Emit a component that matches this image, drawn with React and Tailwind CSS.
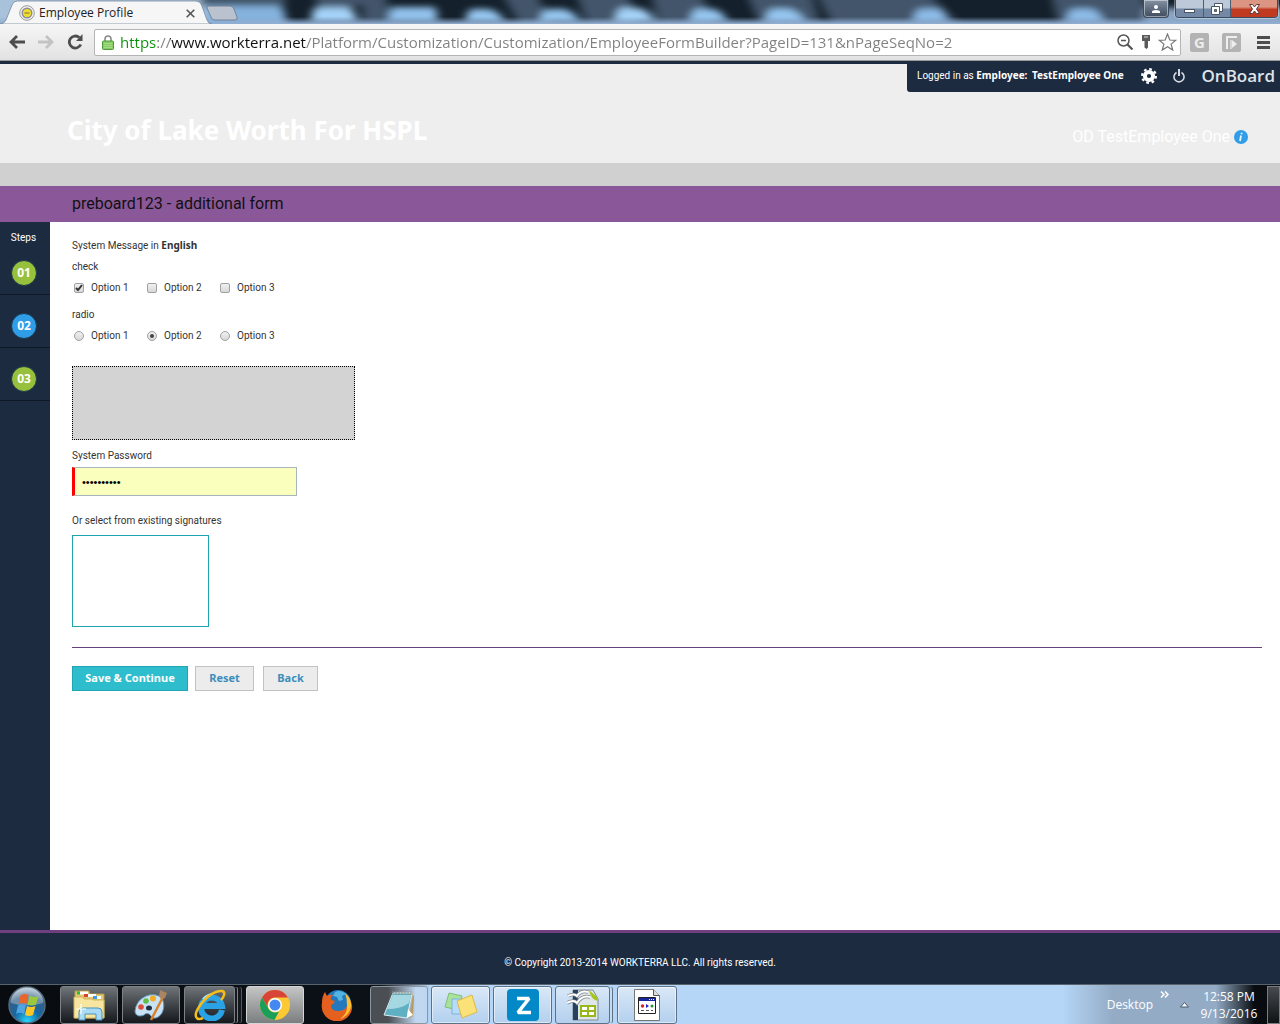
import React from 'react';

const URL = 'https://www.workterra.net/Platform/Customization/Customization/EmployeeFormBuilder?PageID=131&nPageSeqNo=2';

const options = ['Option 1', 'Option 2', 'Option 3'];

const steps = [
    { id: '01', color: 'bg-[#97c03d]' },
    { id: '02', color: 'bg-[#2f9de8]' },
    { id: '03', color: 'bg-[#97c03d]' },
];

/* ---------- browser window ---------- */

const GlassBackdrop = () => (
    <svg className="absolute inset-0 h-full w-full" viewBox="0 0 1280 24" preserveAspectRatio="none" aria-hidden="true">
        <defs>
            <filter id="soft" x="-20%" y="-50%" width="140%" height="200%">
                <feGaussianBlur stdDeviation="5 3" />
            </filter>
            <linearGradient id="edge" x1="0" y1="0" x2="0" y2="1">
                <stop offset="0.7" stopColor="#86a6cc" stopOpacity="0" />
                <stop offset="1" stopColor="#93afd2" />
            </linearGradient>
        </defs>
        <rect width="1280" height="24" fill="#14202b" />
        <g filter="url(#soft)">
            <rect x="-20" y="-10" width="230" height="50" fill="#a9c2dc" />
            <rect x="200" y="-10" width="85" height="16" fill="#3f5468" />
            <path d="M205 6h74q8 2 8 30h-82z" fill="#85b2de" />
            <path d="M310 -10h65l10 16h-65zM500 -10h35l18 40h-30zM575 -10h52l12 40h-50zM650 -10h50l15 40h-55zM745 -10h65l12 40h-60zM815 -10h110l40 40h-130zM1050 -10h95v40h-85z" fill="#43556a" />
            <path d="M365 -10h20l5 34h-28z" fill="#43556a" />
            <path d="M316 7h32q7 2 9 16h-46q1-14 5-16z" fill="#a4d2f8" />
            <path d="M392 7h42q4 2 3 16h-48q0-14 3-16z" fill="#91c1ec" />
            <path d="M471 9h18q12 3 16 14h-40q2-12 6-14z" fill="#95c6f0" />
            <path d="M546 9h18q12 3 16 14h-40q2-12 6-14z" fill="#95c6f0" />
            <path d="M621 8h18q12 3 16 15h-40q2-13 6-15z" fill="#a4d2f8" />
            <path d="M696 9h18q10 3 14 14h-38q2-12 6-14z" fill="#95c6f0" />
            <path d="M771 9h18q12 3 16 14h-40q2-12 6-14z" fill="#95c6f0" />
            <path d="M919 9h20q6 3 8 14h-34q2-12 6-14z" fill="#8dbbe8" />
            <path d="M1072 9h20q8 3 12 14h-38q2-12 6-14z" fill="#8dbbe8" />
            <rect x="1145" y="8" width="160" height="50" fill="#8ba6c4" />
        </g>
        <rect width="1280" height="24" fill="url(#edge)" />
    </svg>
);

const WindowButtons = () => (
    <div className="relative flex h-[19px] items-start gap-[6px] pr-[2px]">
        <button aria-label="Profile" className="flex h-[18px] w-[26px] items-center justify-center rounded-b-[4px] border border-t-0 border-[#3b4a5e] bg-gradient-to-b from-[#8492a4] to-[#3f4c5c] shadow-[inset_0_0_0_1px_rgba(255,255,255,0.45)]">
            <svg width="10" height="10" viewBox="0 0 10 10" fill="#fff">
                <circle cx="5" cy="3" r="2" />
                <path d="M1 9V7.500Q1.500 6 5 6t4 1.500V9z" />
            </svg>
        </button>
        <div className="flex h-[18px] overflow-hidden rounded-b-[4px] border border-t-0 border-[#3b4a5e] shadow-[0_0_0_1px_rgba(255,255,255,0.35)]">
            <button aria-label="Minimize" className="flex w-[28px] items-center justify-center border-r border-[#4b5d75] bg-gradient-to-b from-[#bdc9d8] from-45% to-[#7389a5] to-55%">
                <svg width="13" height="12" viewBox="0 0 13 12">
                    <rect x="1.500" y="6.500" width="10" height="3" fill="#fff" stroke="#4a5568" />
                </svg>
            </button>
            <button aria-label="Restore" className="flex w-[27px] items-center justify-center border-r border-[#4b5d75] bg-gradient-to-b from-[#bdc9d8] from-45% to-[#7389a5] to-55%">
                <svg width="12" height="12" viewBox="0 0 12 12" fill="#fff" stroke="#4a5568">
                    <path d="M3.500.5h8v8h-8z" />
                    <path d="M.5 3.500h8v8h-8z" />
                    <path d="M3.500 6.500h2v2h-2z" fill="#7389a5" />
                </svg>
            </button>
            <button aria-label="Close window" className="flex w-[46px] items-center justify-center bg-gradient-to-b from-[#dd9583] from-40% to-[#c03a22] to-55%">
                <svg width="13" height="12" viewBox="0 0 13 12">
                    <path d="M1.500 1.500h3l2 2.500 2-2.500h3L8.500 6l3 4.500h-3l-2-2.500-2 2.500h-3l3-4.500z" fill="#fff" stroke="#5c3a3a" />
                </svg>
            </button>
        </div>
    </div>
);

const TitleBar = () => (
    <div className="relative flex h-6 items-start justify-between">
        <GlassBackdrop />
        <div className="relative flex h-6">
            <svg className="absolute inset-0" width="240" height="24" viewBox="0 0 240 24" aria-hidden="true">
                <path d="M0 24Q4 24 6 20L12 5Q13.500 1 17 1H196Q200 1 201.500 5L207 20Q208.500 24 212 24z" fill="#f6f6f6" stroke="#77889c" strokeWidth="0.8" />
                <path d="M209 6h21q3 0 4 3l3 8q1 3-2 3h-20q-3 0-4-3l-4-9q-.5-2 2-2z" fill="#b9c2ce" stroke="#66778c" strokeWidth="0.8" />
            </svg>
            <div className="relative flex h-6 w-[200px] items-center pt-[2px] pl-[19px]">
                <svg width="16" height="16" viewBox="0 0 16 16" aria-hidden="true">
                    <circle cx="8" cy="8" r="7.300" fill="#f3f3f3" stroke="#9a9a9a" />
                    <circle cx="8" cy="8" r="4.800" fill="#f0dc2c" stroke="#8c8c98" strokeWidth="1.400" />
                    <path d="M5.500 8h5" stroke="#8a7c55" strokeWidth="1.200" />
                </svg>
                <span className="ml-1 flex-1 text-[12px] text-[#222]">Employee Profile</span>
                <button aria-label="Close tab" className="mr-[5px]">
                    <svg width="9" height="9" viewBox="0 0 9 9" stroke="#555" strokeWidth="1.600">
                        <path d="M.7.7l7.600 7.600M8.300.7L.7 8.300" />
                    </svg>
                </button>
            </div>
            <button aria-label="New tab" className="relative w-[36px]" />
        </div>
        <WindowButtons />
    </div>
);

const Toolbar = () => (
    <div className="flex h-[37px] items-center border-b border-[#9a9a9a] bg-gradient-to-b from-[#f6f6f6] to-[#e2e2e2] pr-[10px] pl-[9px]">
        <button aria-label="Back" className="mr-[13px]">
            <svg width="16" height="14" viewBox="0 0 16 14" fill="none" stroke="#4d4d4d" strokeWidth="2.800">
                <path d="M2 7h14M8 1L2 7l6 6" />
            </svg>
        </button>
        <button aria-label="Forward" className="mr-[13px]">
            <svg width="16" height="14" viewBox="0 0 16 14" fill="none" stroke="#c3c3c3" strokeWidth="2.800">
                <path d="M0 7h14M8 1l6 6-6 6" />
            </svg>
        </button>
        <button aria-label="Reload">
            <svg width="17" height="16" viewBox="0 0 17 16" fill="none" stroke="#4d4d4d" strokeWidth="2.800">
                <path d="M13.800 10.500A6 6 0 1 1 12.300 3.500" />
                <path d="M15.500 0v7H9z" fill="#4d4d4d" stroke="none" />
            </svg>
        </button>
        <div className="ml-[10px] flex h-[27px] flex-1 items-center rounded-[2px] border border-[#b4b4b4] bg-white pr-[3px] pl-[7px]">
            <svg width="12" height="15" viewBox="0 0 12 15" aria-hidden="true">
                <path d="M3 7V4a3 3 0 0 1 6 0v3" fill="none" stroke="#8b8b8b" strokeWidth="1.600" />
                <rect x="0.500" y="6" width="11" height="8.500" rx="1" fill="#86cc63" stroke="#4f9a3a" />
                <path d="M2 8.500h8M2 10.500h8M2 12.500h8" stroke="#a5dd86" />
            </svg>
            <input
                type="text"
                aria-label="Address"
                defaultValue={URL}
                className="ml-[6px] h-[25px] min-w-0 flex-1 bg-[linear-gradient(90deg,#0a8f0a_36px,#808080_36px,#808080_50px,#111_50px,#111_186px,#808080_186px)] bg-clip-text text-[15px] text-transparent outline-none"
            />
            <svg width="16" height="16" viewBox="0 0 16 16" fill="none" stroke="#555" strokeWidth="1.500" aria-hidden="true">
                <circle cx="6.500" cy="6.500" r="5.500" />
                <path d="M4 6.500h5" />
                <path d="M10.500 10.500l5 5" strokeWidth="2.200" />
            </svg>
            <svg className="ml-2" width="10" height="14" viewBox="0 0 10 14" fill="#5a5a5a" aria-hidden="true">
                <path d="M1 0h8v6H7v6.500L5.500 14 3.500 12.500V6H1z" />
                <path d="M3 2h4" stroke="#ddd" />
            </svg>
            <svg className="ml-[7px]" width="19" height="18" viewBox="0 0 19 18" fill="#fff" stroke="#777" strokeWidth="1.200" aria-hidden="true">
                <path d="M9.500 1l2.300 6 6 .3-4.700 3.800 1.700 6-5.300-3.400-5.300 3.400 1.700-6L1.200 7.300l6-.3z" />
            </svg>
        </div>
        <button aria-label="G extension" className="ml-[9px] h-[19px] w-[19px] rounded-[2px] bg-[#b3b3b3] text-[15px] leading-[19px] font-bold text-[#ececec]">G</button>
        <button aria-label="Flag extension" className="ml-[13px] flex h-[19px] w-[19px] items-center justify-center rounded-[2px] bg-[#b3b3b3]">
            <svg width="13" height="14" viewBox="0 0 13 14" fill="none" stroke="#eee" strokeWidth="2">
                <path d="M2 14V2h10" />
                <path d="M6 14V5" strokeWidth="1.200" />
                <path d="M7 5l5 4-5 4z" fill="#eee" stroke="none" />
            </svg>
        </button>
        <button aria-label="Menu" className="ml-4 flex w-[13px] flex-col gap-[2px]">
            <span className="h-[3px] bg-[#4d4d4d]" />
            <span className="h-[3px] bg-[#4d4d4d]" />
            <span className="h-[3px] bg-[#4d4d4d]" />
        </button>
    </div>
);

/* ---------- site ---------- */

const Gear = () => (
    <svg width="16" height="16" viewBox="0 0 16 16" aria-hidden="true">
        <circle cx="8" cy="8" r="4.100" fill="none" stroke="#fff" strokeWidth="4" />
        <circle cx="8" cy="8" r="6.900" fill="none" stroke="#fff" strokeWidth="2.200" strokeDasharray="2.700 2.719" />
    </svg>
);

const Power = () => (
    <svg width="12" height="14" viewBox="0 0 12 14" fill="none" stroke="#d5dae0" strokeWidth="1.600" aria-hidden="true">
        <path d="M3.500 3.500a5 5 0 1 0 5 0" />
        <path d="M6 0v7" strokeWidth="2" />
    </svg>
);

const SiteHeader = () => (
    <header className="h-[102px] border-t-[3px] border-[#1c2b40] bg-[#eee]">
        <div className="flex justify-end">
            <div className="flex h-7 w-[373px] items-center rounded-bl-[3px] bg-[#1c2b40] pr-[5px] pb-[5px] pl-[10px] text-white">
                <p className="flex-1 text-[10px] whitespace-nowrap">
                    Logged in as <b className="mr-[2px] font-['Noto_Sans']">Employee:</b> <b className="font-['Noto_Sans']">TestEmployee One</b>
                </p>
                <button aria-label="Settings" className="mr-4"><Gear /></button>
                <button aria-label="Log out" className="mr-4"><Power /></button>
                <a href="#" className="font-['Open_Sans'] text-[17px] leading-[20px] font-semibold text-[#dfe3e8]">OnBoard</a>
            </div>
        </div>
        <div className="flex items-start justify-between pt-5 pr-8 pl-[67px] text-white">
            <h1 className="font-['Noto_Sans'] text-[26px] leading-9 font-bold">City of Lake Worth For HSPL</h1>
            <div className="flex items-center gap-1 pt-[13px]">
                <span className="text-[16px] leading-6">OD TestEmployee One</span>
                <svg width="14" height="14" viewBox="0 0 14 14" aria-hidden="true">
                    <circle cx="7" cy="7" r="7" fill="#2f9de8" />
                    <path d="M7.800 2.800l-.4 1.500M7 5.500l-1 5.500" stroke="#e8f4ff" strokeWidth="1.800" />
                </svg>
            </div>
        </div>
    </header>
);

const StepsNav = () => (
    <nav className="w-[50px] shrink-0 bg-[#1c2b40] text-white">
        <p className="pr-[3px] pt-[6px] text-center text-[10px] leading-5">Steps</p>
        <ol className="-mt-[6px]">
            {steps.map((s) => (
                <li key={s.id} className="flex h-[53px] items-end justify-center border-b border-[#0f1925] pr-[2px] pb-2">
                    <a href="#" className={`h-[26px] w-[26px] rounded-full border border-[#1c3a4c] text-center font-['Noto_Sans'] text-[12px] leading-6 font-bold ${s.color}`}>{s.id}</a>
                </li>
            ))}
        </ol>
    </nav>
);

const OptionGroup = ({ type, checked }) => (
    <fieldset>
        <legend className="leading-[21px]">{type === 'checkbox' ? 'check' : 'radio'}</legend>
        <div className="flex pl-[2px]">
            {options.map((label) => (
                <label key={label} className="flex h-[21px] w-[73px] items-center gap-[7px]">
                    <span className="relative flex">
                        <input
                            type={type}
                            name={type}
                            defaultChecked={label === checked}
                            className={`peer h-[10px] w-[10px] appearance-none border border-[#a0a0a0] bg-gradient-to-b from-[#f0f0f0] to-[#d8d8d8] ${type === 'radio' ? 'rounded-full' : 'rounded-[2px]'}`}
                        />
                        <svg className="pointer-events-none absolute inset-0 hidden peer-checked:block" width="10" height="10" viewBox="0 0 10 10" fill="none" stroke="#333" strokeWidth="2">
                            {type === 'radio' ? <circle cx="5" cy="5" r="2" fill="#444" stroke="none" /> : <path d="M2 5l2 2 4-5" />}
                        </svg>
                    </span>
                    {label}
                </label>
            ))}
        </div>
    </fieldset>
);

const EmployeeForm = () => (
    <form className="flex-1 pt-[13px] pr-[18px] pl-[22px] text-[10px] text-[#333]" onSubmit={(e) => e.preventDefault()}>
        <p className="leading-[21px]">System Message in <b className="font-['Noto_Sans']">English</b></p>
        <OptionGroup type="checkbox" checked="Option 1" />
        <div className="h-[6px]" />
        <OptionGroup type="radio" checked="Option 2" />
        <div className="mt-5 h-[74px] w-[283px] border border-dotted border-black bg-[#d3d3d3]" />
        <label htmlFor="password" className="mt-[5px] block leading-[21px]">System Password</label>
        <input
            id="password"
            type="password"
            defaultValue="employee10"
            className="mt-[1px] block h-[29px] w-[225px] border border-l-[3px] border-[#a9b5bd] border-l-[#f00] bg-[#faffbd] pl-[7px] font-['Liberation_Sans'] text-[11px] text-black outline-none"
        />
        <p className="mt-[14px] leading-[21px]">Or select from existing signatures</p>
        <div className="mt-1 h-[92px] w-[137px] border border-[#1fa5b0]" />
        <hr className="mt-5 border-[#69417a]" />
        <div className="mt-[18px] flex h-[25px] font-['Noto_Sans'] text-[11px] font-bold text-[#3d8ebb]">
            <button type="submit" className="mr-[7px] w-[116px] border border-[#21a5b3] bg-[#2dbdcc] text-white">Save &amp; Continue</button>
            <button type="reset" className="mr-[9px] w-[59px] border border-[#c2c2c2] bg-[#ececec]">Reset</button>
            <button type="button" className="w-[55px] border border-[#c2c2c2] bg-[#ececec]">Back</button>
        </div>
    </form>
);

/* ---------- taskbar ---------- */

const StartOrb = () => (
    <svg width="38" height="38" viewBox="0 0 38 38" aria-hidden="true">
        <defs>
            <radialGradient id="orb" cx="0.5" cy="0.95" r="0.9">
                <stop offset="0" stopColor="#26d6fb" />
                <stop offset="0.4" stopColor="#1668a6" />
                <stop offset="0.75" stopColor="#335f86" />
                <stop offset="1" stopColor="#a5bccb" />
            </radialGradient>
        </defs>
        <circle cx="19" cy="19" r="18" fill="url(#orb)" stroke="#54697c" strokeWidth="1.500" />
        <path d="M3 17A16 16 0 0 1 35 17Q19 22 3 17z" fill="#fff" fillOpacity="0.3" />
        <path d="M12.500 9.500q4-2.500 8-.5l-2 9q-4-2-8 0z" fill="#e8662a" />
        <path d="M21.500 9.500q4 2.500 9 .5l-2.500 8.500q-4 2-8.500 0z" fill="#9cc93c" />
        <path d="M10 19.500q4-2 8 0l-2 8.500q-4-2.500-8 0z" fill="#4fa5e4" />
        <path d="M19 20q4 2 8.500 0l-2.500 9q-4 2-8 0z" fill="#fbc727" />
    </svg>
);

const Explorer = () => (
    <svg width="34" height="32" viewBox="0 0 34 32" aria-hidden="true">
        <path d="M3 2h14l1 3h14v24H3z" fill="#e3c76c" stroke="#b59a48" />
        <path d="M5 2.500h3v3H5z" fill="#1cc43c" />
        <path d="M8 2.500h8v3H8z" fill="#fff" />
        <path d="M12 5h4v3h-4z" fill="#d8432e" />
        <path d="M16 5h8v3h-8z" fill="#fff" />
        <path d="M21 7h4v3h-4z" fill="#3d9ae8" />
        <path d="M25 7h4v3h-4z" fill="#fff" />
        <path d="M2 8h9l1 2h8l1 1h11v18H2z" fill="#f8e6a0" stroke="#cdb362" />
        <path d="M7 31V23q0-4 4-4h15q4 0 4 4v8h-6v-6H13v6z" fill="#a9dcf4" stroke="#4793bd" />
        <path d="M9 15v10M4 20h10" stroke="#fff" strokeWidth="1.200" />
    </svg>
);

const Paint = () => (
    <svg width="34" height="32" viewBox="0 0 34 32" aria-hidden="true">
        <path d="M1 22C2 10 14 4 22 6c9 2 9 12 6 18-3 5-9 7-11 3-2-3-5-3-7-1-4 2-9 1-9-4z" fill="#c8e3f5" stroke="#5f8fb3" />
        <ellipse cx="15" cy="19" rx="3" ry="2.500" fill="#20303f" />
        <circle cx="7" cy="18" r="2.800" fill="#e04a3a" />
        <circle cx="12" cy="12" r="2.800" fill="#63bb4a" />
        <circle cx="19" cy="9.500" r="3" fill="#f3ab22" />
        <path d="M29 8L17 31" stroke="#d9822b" strokeWidth="2.500" />
        <path d="M26 1l7 3-2 5-4 1-2-3z" fill="#a98563" />
    </svg>
);

const InternetExplorer = () => (
    <svg width="32" height="32" viewBox="0 0 32 32" fill="none" aria-hidden="true">
        <path d="M28 21A10.500 10.500 0 1 1 28 17H9" stroke="#2aa2e6" strokeWidth="6" />
        <path d="M9 10Q12 6 18 5" stroke="#a7e2fb" strokeWidth="2" />
        <path d="M9 29C2 32-1 27 5 18 11 8 22 1 28 2c4 1 2 6-1 9" stroke="#f4bd1c" strokeWidth="2.500" />
    </svg>
);

const Chrome = () => (
    <svg width="30" height="30" viewBox="0 0 30 30" aria-hidden="true">
        <circle cx="15" cy="15" r="15" fill="#fcc934" />
        <path d="M2 7.500A15 15 0 0 1 28 7.500H15A7.500 7.500 0 0 0 8.500 18.700z" fill="#d84437" />
        <path d="M2 7.500L8.500 18.700Q11 22.500 15 22.500q2.500 0 4-1L14.500 30A15 15 0 0 1 2 7.500z" fill="#1a9f5b" />
        <circle cx="15" cy="15" r="7" fill="#fff" />
        <circle cx="15" cy="15" r="5.500" fill="#4688f1" />
    </svg>
);

const Firefox = () => (
    <svg width="32" height="32" viewBox="0 0 32 32" aria-hidden="true">
        <circle cx="17" cy="14" r="13" fill="#2478bd" />
        <path d="M14 3q6-3 11 2l-4 2 1 4-4 1-2-4-4-1z" fill="#53b4e2" />
        <path d="M1 14Q1 7 4 3l2 4q3-2 6-1-3 2-2 5l4 1q-1 3-4 4 0 6 7 6 5 0 8-3 3-5 1-12 6 6 5 13A15 15 0 0 1 1 14z" fill="#e5601f" />
        <path d="M24 4q7 6 6 14-2 9-11 12 8-6 7-14 0-7-2-12z" fill="#fbc02f" />
    </svg>
);

const Notepad = () => (
    <svg width="34" height="32" viewBox="0 0 34 32" aria-hidden="true">
        <path d="M12 3l19 1-4 25 4-2 1-20z" fill="#b79c63" />
        <path d="M11 4h19l-5 25-23-3z" fill="#5fb0c2" stroke="#dcecf0" />
        <path d="M11 6h18l-2 8q-8 6-22 6z" fill="#a5d8e2" />
        <path d="M11 2v4M14 2v4M17 2v4M20 2v4M23 2v4M26 2v4M29 2v4" stroke="#8e979c" />
        <path d="M25 29l1-9 5 6z" fill="#fff" />
    </svg>
);

const StickyNotes = () => (
    <svg width="34" height="30" viewBox="0 0 34 30" aria-hidden="true">
        <path d="M5 3l13 3-4 14L1 17z" fill="#a9e39a" stroke="#7ebf78" />
        <path d="M8 9h14v15H8z" fill="#b6dcf8" stroke="#7fb1de" />
        <path d="M13 11l15-6 5 17-15 6z" fill="#fbe278" stroke="#dcb849" />
    </svg>
);

const Zimbra = () => (
    <svg width="32" height="32" viewBox="0 0 32 32" aria-hidden="true">
        <rect width="32" height="32" rx="4" fill="#0388c8" />
        <path d="M10 9.500h12L11 23.500h13" fill="none" stroke="#fff" strokeWidth="3.600" strokeLinejoin="bevel" />
    </svg>
);

const OfficeCalc = () => (
    <svg width="32" height="32" viewBox="0 0 32 32" aria-hidden="true">
        <path d="M6 1h20l5 9v21H6z" fill="#dfe6ea" stroke="#7f8b8f" />
        <path d="M6 1h5v30H6z" fill="#24425e" />
        <path d="M22 1l9 8v3q-7-1-9-11z" fill="#a6c61c" />
        <path d="M14 17h14v10H14zM21 17v10M14 22h14" fill="#fff" stroke="#96b81b" strokeWidth="2" />
        <path d="M1 7q6-3 9 0 4-6 11-4M0 14q7-4 10 0 5-8 13-6" fill="none" stroke="#7b858c" strokeWidth="3.500" />
        <path d="M1 7q6-3 9 0 4-6 11-4M0 14q7-4 10 0 5-8 13-6" fill="none" stroke="#fff" strokeWidth="2" />
    </svg>
);

const BatchFile = () => (
    <svg width="26" height="32" viewBox="0 0 26 32" aria-hidden="true">
        <path d="M.5.5h19l6 6v25H.5z" fill="#fff" stroke="#777" />
        <path d="M19.500.5v6h6" fill="#ddd" stroke="#555" />
        <path d="M4.500 8.500h17v16h-17z" fill="#fff" stroke="#222" />
        <path d="M5 9h16v3H5z" fill="#1a2a9c" />
        <path d="M15 10.500h5" stroke="#fff" strokeDasharray="1 1" />
        <circle cx="8.500" cy="17" r="1.700" fill="#d22" />
        <path d="M12 15l3 2-3 2z" fill="#22c" />
        <circle cx="18" cy="17" r="1.500" fill="#293" />
        <path d="M7 21.500h3M12 21.500h3M17 21.500h2" stroke="#555" />
    </svg>
);

const darkBtn = 'border-[#7c8287] bg-gradient-to-b from-[#70757a] to-[#15191d]';
const glassBtn = 'border-[#5d7186] bg-gradient-to-b from-[#d9e8f7] to-[#b3d0ee] shadow-[inset_0_0_0_1px_rgba(255,255,255,0.5)]';

const apps = [
    { name: 'Windows Explorer', icon: <Explorer />, box: `w-[58px] mr-1 ${darkBtn}` },
    { name: 'Paint', icon: <Paint />, box: `w-[58px] mr-1 ${darkBtn}` },
    { name: 'Internet Explorer', icon: <InternetExplorer />, box: `w-[51px] mr-[11px] ${darkBtn} shadow-[3px_0_0_-1px_#15191d,4px_0_0_-1px_#7c8287,7px_0_0_-1px_#15191d,8px_0_0_-1px_#54595d]` },
    { name: 'Google Chrome', icon: <Chrome />, box: 'w-[58px] mr-1 border-[#d5d5d5] bg-gradient-to-b from-[#c5c5c5] to-[#7b7f80]' },
    { name: 'Firefox', icon: <Firefox />, box: 'w-[58px] mr-1 border-transparent' },
    { name: 'Notepad', icon: <Notepad />, box: 'w-[58px] mr-[3px] border-[#8c969f] bg-gradient-to-r from-[#4b4f54] from-30% to-[#bfd7f0] to-80%' },
    { name: 'Sticky Notes', icon: <StickyNotes />, box: `w-[59px] mr-[3px] ${glassBtn}` },
    { name: 'Zimbra', icon: <Zimbra />, box: `w-[59px] mr-[3px] ${glassBtn}` },
    { name: 'OpenOffice Calc', icon: <OfficeCalc />, box: 'w-[55px] mr-[7px] border-[#5d7186] bg-gradient-to-b from-[#d9e8f7] to-[#b3d0ee] shadow-[3px_0_0_-1px_#c4dcf3,4px_0_0_-1px_#5d7186]' },
    { name: 'Command Script', icon: <BatchFile />, box: `w-[60px] ${glassBtn}` },
];

const Taskbar = () => (
    <div className="flex h-10 items-center border-t border-[#59636e] bg-[linear-gradient(90deg,#080c10_0,#0b1117_380px,#b5d6f7_430px,#b5d6f7_83%,#93abc5_87%,#93abc5_95%,#080c10_98%)] pl-2">
        <button aria-label="Start" className="mr-[14px]"><StartOrb /></button>
        {apps.map((a) => (
            <button key={a.name} aria-label={a.name} className={`flex h-[38px] items-center justify-center rounded-[3px] border ${a.box}`}>{a.icon}</button>
        ))}
        <div className="ml-auto flex h-full items-center text-[12px] leading-[17px] text-white">
            <span>Desktop</span>
            <button aria-label="More toolbars" className="mr-[11px] mb-5 ml-[7px]">
                <svg width="9" height="7" viewBox="0 0 9 7" fill="none" stroke="#fff" strokeWidth="1.500">
                    <path d="M1 .5l3 3-3 3M5 .5l3 3-3 3" />
                </svg>
            </button>
            <button aria-label="Show hidden icons">
                <svg width="9" height="6" viewBox="0 0 9 6">
                    <path d="M4.500.5l4 4.500h-8z" fill="#fff" stroke="#41566e" />
                </svg>
            </button>
            <div className="ml-[10px] w-[60px] text-center">
                <p>12:58 PM</p>
                <p>9/13/2016</p>
            </div>
            <button aria-label="Show desktop" className="ml-2 h-[38px] w-[13px] border border-[#767c82] bg-gradient-to-b from-[#474b50] to-[#101316]" />
        </div>
    </div>
);

export default function App() {
    return (
        <div className="flex min-h-screen flex-col bg-white font-['Open_Sans',sans-serif]">
            <TitleBar />
            <Toolbar />
            <div className="flex flex-1 flex-col font-['Roboto',sans-serif]">
                <SiteHeader />
                <div className="h-[23px] bg-[#d0d0d0]" />
                <h2 className="bg-[#8a5899] pl-[72px] text-[16px] leading-9 text-[#111]">preboard123 - additional form</h2>
                <main className="flex flex-1">
                    <StepsNav />
                    <EmployeeForm />
                </main>
                <footer className="h-[54px] border-t-[3px] border-[#6f3f7f] bg-[#1c2b40] pt-5 text-center text-[10px] leading-5 text-white">
                    © Copyright 2013-2014 WORKTERRA LLC. All rights reserved.
                </footer>
            </div>
            <Taskbar />
        </div>
    );
}
